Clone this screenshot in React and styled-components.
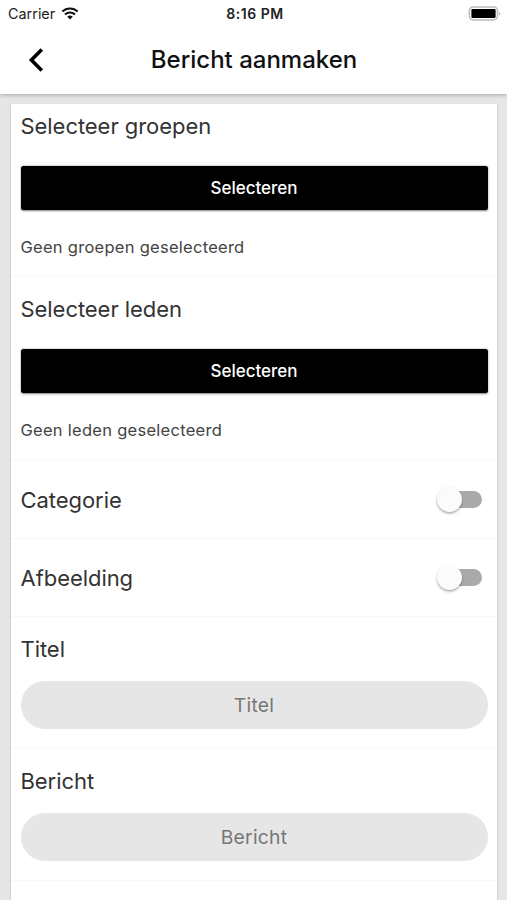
import React, { useState } from 'react';
import styled, { createGlobalStyle } from 'styled-components';

const GlobalStyle = createGlobalStyle`
  * {
    box-sizing: border-box;
  }
  body {
    margin: 0;
    font-family: Inter, 'Liberation Sans', sans-serif;
    background: #e6e6e6;
  }
`;

const Screen = styled.div`
  display: flex;
  flex-direction: column;
  width: 507px;
  height: 900px;
  overflow: hidden;
  background: #e6e6e6;
`;

const Top = styled.header`
  flex: none;
  height: 94px;
  background: #fff;
  box-shadow: 0 1px 4px rgba(0, 0, 0, 0.28);
  z-index: 1;
`;

const StatusBar = styled.div`
  display: grid;
  grid-template-columns: 1fr auto 1fr;
  align-items: center;
  height: 27px;
  padding: 0 6px 0 8px;
  color: #222;
`;

const Carrier = styled.div`
  display: flex;
  align-items: center;
  gap: 6px;
  font-size: 14.4px;
`;

const Clock = styled.div`
  padding-left: 1px;
  font-size: 14px;
  font-weight: 600;
  letter-spacing: 0.55px;
`;

const Battery = styled.svg`
  justify-self: end;
`;

const NavBar = styled.div`
  display: grid;
  grid-template-columns: 71px 1fr 70px;
  align-items: center;
  height: 65px;
`;

const BackButton = styled.button`
  display: flex;
  justify-content: center;
  padding: 1px 0 0;
  border: 0;
  background: none;
`;

const PageTitle = styled.h1`
  margin: 0;
  text-align: center;
  font-size: 24px;
  font-weight: 500;
  letter-spacing: 0;
  color: #111;
`;

const Card = styled.main`
  flex: 1;
  margin: 10px 10px 0 11px;
  background: #fff;
  box-shadow: 0 1px 2px rgba(0, 0, 0, 0.25);
`;

const Section = styled.section`
  padding: ${({ first }) => (first ? '8px 9px 19px' : '18px 9px 19px')};
  border-bottom: 1px solid #f7f7f7;
`;

const PickSection = styled(Section)`
  padding-bottom: ${({ first }) => (first ? '19px' : '20px')};
`;

const ToggleRow = styled(Section)`
  display: flex;
  align-items: center;
  justify-content: space-between;
  height: 78px;
  padding: 0 15.5px 0 9px;
`;

const Heading = styled.h2`
  margin: 0;
  padding-left: 0.5px;
  font-size: 22px;
  line-height: 28px;
  font-weight: 400;
  letter-spacing: -0.05px;
  color: #333;
`;

const SelectButton = styled.button`
  display: block;
  width: 467px;
  height: 44px;
  margin: 26px 0 0 0.5px;
  padding: 0;
  border: 0;
  border-radius: 2.5px;
  background: #000;
  box-shadow: 0 0.5px 2px rgba(0, 0, 0, 0.5);
  color: #fff;
  font-family: inherit;
  font-size: 17px;
  font-weight: 500;
`;

const Hint = styled.p`
  margin: 27px 0 0;
  padding-left: 0.5px;
  font-size: 16.5px;
  line-height: 20px;
  letter-spacing: 0.27px;
  color: #444;
`;

const Track = styled.button`
  display: flex;
  align-items: center;
  justify-content: ${({ on }) => (on ? 'flex-end' : 'flex-start')};
  width: 41px;
  height: 17px;
  padding: 0;
  border: 0;
  border-radius: 9px;
  background: #aaa;
`;

const Knob = styled.span`
  flex: none;
  width: 25px;
  height: 25px;
  margin: 0 -4px;
  border-radius: 50%;
  background: #fbfbfb;
  box-shadow: 0 1.5px 2.5px rgba(0, 0, 0, 0.35);
`;

const Input = styled.input`
  display: block;
  width: 467px;
  height: 47.5px;
  margin: 18px 0 0.5px 0.5px;
  padding: 0 20px;
  border: 0;
  border-radius: 24px;
  background: #e6e6e6;
  text-align: center;
  font-family: inherit;
  font-size: 19.3px;
  letter-spacing: 0.25px;
  color: #333;
  &::placeholder {
    color: #777;
    opacity: 1;
  }
`;

const Picker = ({ title, hint, first }) => (
  <PickSection first={first}>
    <Heading>{title}</Heading>
    <SelectButton>Selecteren</SelectButton>
    <Hint>{hint}</Hint>
  </PickSection>
);

const Toggle = ({ title }) => {
  const [on, setOn] = useState(false);
  return (
    <ToggleRow>
      <Heading>{title}</Heading>
      <Track on={on} aria-label={title} onClick={() => setOn(!on)}>
        <Knob />
      </Track>
    </ToggleRow>
  );
};

const Field = ({ title }) => (
  <Section>
    <Heading>{title}</Heading>
    <Input placeholder={title} />
  </Section>
);

const App = () => (
  <Screen>
    <GlobalStyle />
    <Top>
      <StatusBar>
        <Carrier>
          Carrier
          <svg width="18" height="13" viewBox="0 0 18 13" fill="none" stroke="#111" strokeWidth="2.1">
            <path d="M1.3 4.6a11 11 0 0 1 15.4 0" />
            <path d="M4 7.5a7.1 7.1 0 0 1 10 0" />
            <path d="M9 12.6 6.2 9.8a4 4 0 0 1 5.6 0z" fill="#111" stroke="none" />
          </svg>
        </Carrier>
        <Clock>8:16 PM</Clock>
        <Battery width="33" height="15" viewBox="0 0 33 15">
          <rect x="1.4" y="0.9" width="28.1" height="13" rx="3.8" fill="#fff" stroke="#bbb" strokeWidth="1.5" />
          <rect x="3.4" y="2.9" width="24.2" height="9" rx="1.2" fill="#000" />
          <path d="M31 5.4q1.6 2 0 4z" fill="#999" />
        </Battery>
      </StatusBar>
      <NavBar>
        <BackButton aria-label="Terug">
          <svg width="16" height="24" viewBox="0 0 16 24" fill="none" stroke="#000" strokeWidth="3.6">
            <path d="M13.8 1.5 3.4 12l10.4 10.5" />
          </svg>
        </BackButton>
        <PageTitle>Bericht aanmaken</PageTitle>
      </NavBar>
    </Top>
    <Card>
      <Picker first title="Selecteer groepen" hint="Geen groepen geselecteerd" />
      <Picker title="Selecteer leden" hint="Geen leden geselecteerd" />
      <Toggle title="Categorie" />
      <Toggle title="Afbeelding" />
      <Field title="Titel" />
      <Field title="Bericht" />
    </Card>
  </Screen>
);

export default App;
